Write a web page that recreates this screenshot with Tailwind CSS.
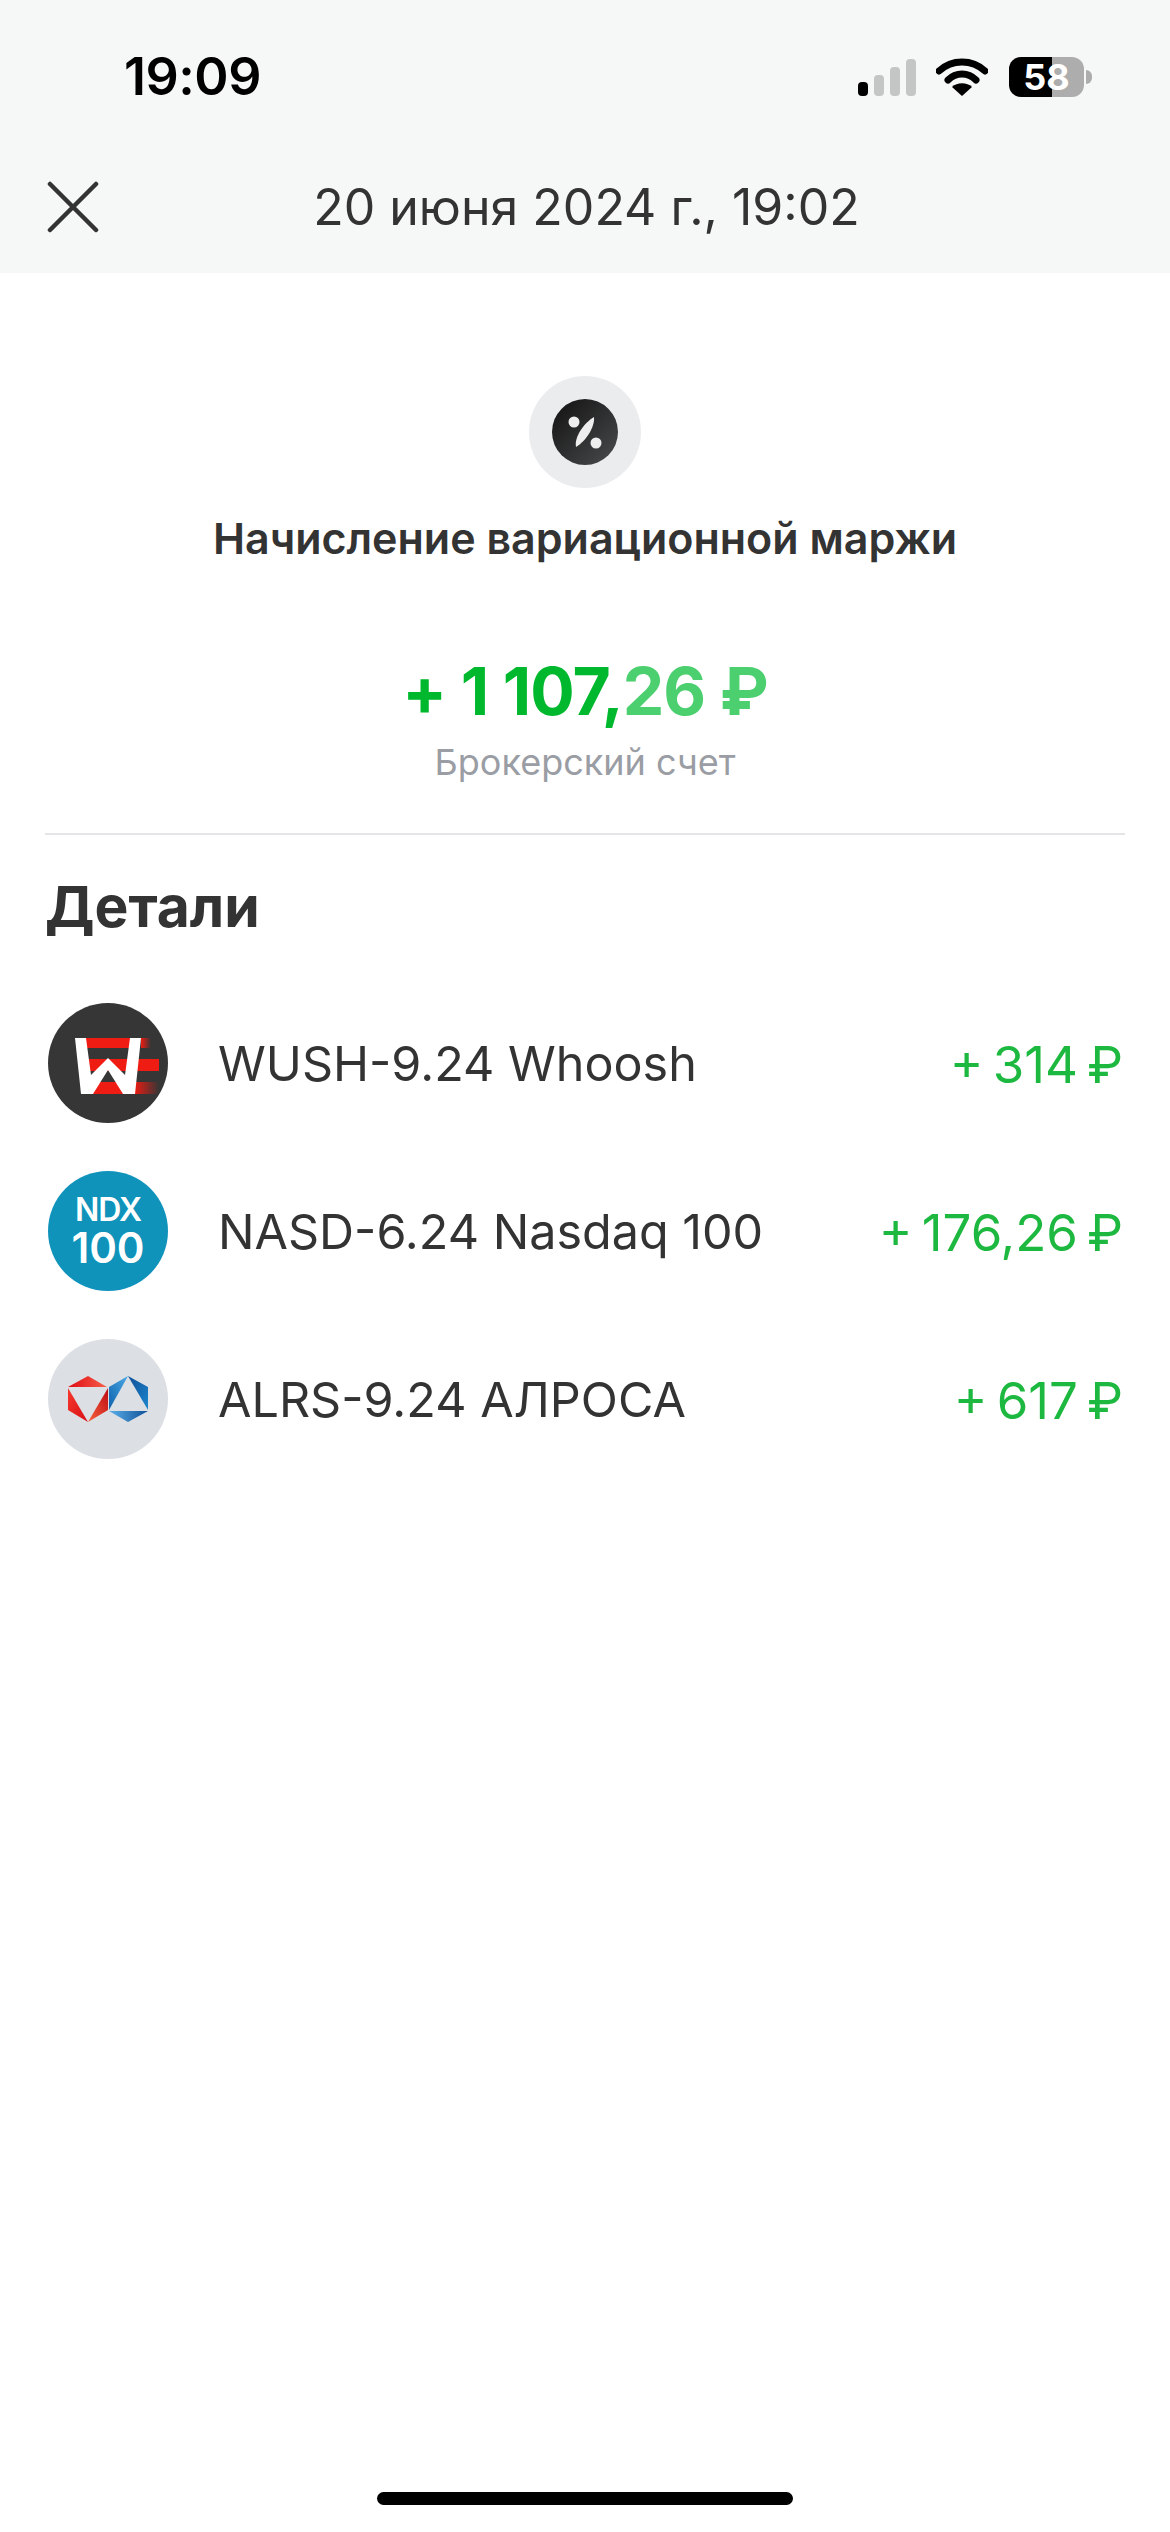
<!DOCTYPE html>
<html lang="ru">
<head>
  <meta charset="UTF-8" />
  <meta name="viewport" content="width=device-width, initial-scale=1.0"/>
  <title>Начисление вариационной маржи</title>
  <script src="https://cdn.jsdelivr.net/npm/@tailwindcss/browser@4"></script>
</head>
<body class="bg-white font-['Inter',sans-serif] text-[#333333]">
<div class="flex flex-col w-[1170px] h-[2532px] overflow-hidden">

  <!-- Header -->
  <header class="bg-[#f6f7f7] h-[273px] shrink-0">
    <!-- Status bar -->
    <div class="flex items-center justify-between h-[154px] pl-[124px] pr-[78px]">
      <span class="text-[52px] leading-none font-semibold text-black tracking-[-0.5px]">19:09</span>
      <div class="flex items-center">
        <svg width="60" height="40" viewBox="0 0 60 40" class="mr-[20px]">
          <rect x="2" y="25" width="10" height="14" rx="4" fill="#000"/>
          <rect x="18" y="18" width="10" height="21" rx="4" fill="#c4c6c6"/>
          <rect x="34" y="10" width="10" height="29" rx="4" fill="#c4c6c6"/>
          <rect x="50" y="2" width="10" height="37" rx="4" fill="#c4c6c6"/>
        </svg>
        <svg width="52" height="40" viewBox="0 0 52 40" class="mr-[21px]">
          <path d="M3 14 C16 2 36 2 49 14" fill="none" stroke="#000" stroke-width="7" stroke-linecap="round"/>
          <path d="M12 23 C20 15 32 15 40 23" fill="none" stroke="#000" stroke-width="7" stroke-linecap="round"/>
          <path d="M26 39 L16 30 C21 25 31 25 36 30 Z" fill="#000"/>
        </svg>
        <div class="w-[75px] h-[40px] rounded-[12px] bg-[linear-gradient(90deg,#000000_43px,#adadad_43px)] flex items-center justify-center">
          <span class="text-[36px] leading-none font-bold text-white">58</span>
        </div>
        <div class="w-[6px] h-[14px] rounded-r-full bg-[#adadad] ml-[2px]"></div>
      </div>
    </div>
    <!-- Nav row -->
    <div class="grid grid-cols-[1fr_auto_1fr] items-center h-[106px] pl-[47px] pr-[44px]">
      <svg width="52" height="52" viewBox="0 0 52 52">
        <path d="M3 3 L49 49 M49 3 L3 49" stroke="#333333" stroke-width="4.5" stroke-linecap="round" fill="none"/>
      </svg>
      <span class="text-[50px] leading-none">20 июня 2024 г., 19:02</span>
      <span></span>
    </div>
  </header>

  <!-- Operation summary -->
  <section class="flex flex-col items-center pt-[103px] mx-[45px] border-b-2 border-[#e3e5e6] h-[562px]">
    <div class="w-[112px] h-[112px] rounded-full bg-[#eaecee] flex items-center justify-center">
      <svg width="66" height="66" viewBox="0 0 66 66">
        <defs>
          <linearGradient id="darkFill" x1="0" y1="0" x2="1" y2="1">
            <stop offset="0" stop-color="#111111"/>
            <stop offset="1" stop-color="#4a4c4d"/>
          </linearGradient>
        </defs>
        <circle cx="33" cy="33" r="33" fill="url(#darkFill)"/>
        <circle cx="22" cy="23" r="5.5" fill="#eeeeee"/>
        <circle cx="44" cy="44" r="5.5" fill="#eeeeee"/>
        <path d="M42 18 C43 28 34 42 24 48 C22 38 32 24 42 18 Z" fill="#eeeeee"/>
      </svg>
    </div>
    <h1 class="mt-[25px] text-[43px] leading-[50px] font-semibold">Начисление вариационной маржи</h1>
    <div class="mt-[88px] text-[66px] leading-[80px] font-bold text-[#00b82d] tracking-[-1px]">+ 1 107,<span class="text-[#4ccf6f]">26 ₽</span></div>
    <div class="mt-[9px] text-[36px] leading-[44px] text-[#9a9da4]">Брокерский счет</div>
  </section>

  <!-- Details -->
  <section class="px-[45px] pt-[38px]">
    <h2 class="text-[57px] leading-[68px] font-bold">Детали</h2>
    <ul class="mt-[62px] flex flex-col gap-[48px]">

      <li class="flex items-center h-[120px]">
        <svg width="120" height="120" viewBox="0 0 120 120" class="ml-[3px] shrink-0">
          <defs>
            <linearGradient id="redFade" x1="0" y1="0" x2="1" y2="0">
              <stop offset="0" stop-color="#f01a10"/>
              <stop offset="1" stop-color="#f01a10" stop-opacity="0"/>
            </linearGradient>
          </defs>
          <circle cx="60" cy="60" r="60" fill="#363636"/>
          <rect x="36" y="35" width="48" height="10" fill="#ee1c12"/>
          <rect x="93" y="35" width="10" height="10" fill="url(#redFade)"/>
          <rect x="38" y="56" width="73" height="12" fill="#ee1c12"/>
          <rect x="42" y="79" width="46" height="12" fill="#ee1c12"/>
          <rect x="86" y="79" width="25" height="12" fill="url(#redFade)"/>
          <polygon points="27,35 38,35 43,72 60,55 77,72 82,35 93,35 87,91 75,91 60,67 45,91 33,91" fill="#ffffff"/>
        </svg>
        <span class="ml-[50px] text-[48.5px] leading-none mt-[2px]">WUSH-9.24 Whoosh</span>
        <span class="ml-auto pr-[2px] text-[51px] leading-none mt-[2px] text-[#1db83f]">+&#8201;314&#8201;₽</span>
      </li>

      <li class="flex items-center h-[120px]">
        <div class="ml-[3px] w-[120px] h-[120px] rounded-full bg-[#0f93bb] shrink-0 flex flex-col items-center justify-center gap-[1px] text-white font-semibold">
          <span class="text-[32px] leading-none tracking-[-1px]">NDX</span>
          <span class="text-[42px] leading-none">100</span>
        </div>
        <span class="ml-[50px] text-[48.5px] leading-none mt-[2px]">NASD-6.24 Nasdaq 100</span>
        <span class="ml-auto pr-[2px] text-[51px] leading-none mt-[2px] text-[#1db83f]">+&#8201;176,26&#8201;₽</span>
      </li>

      <li class="flex items-center h-[120px]">
        <svg width="120" height="120" viewBox="0 0 120 120" class="ml-[3px] shrink-0">
          <defs>
            <linearGradient id="redTop" x1="0" y1="0" x2="1" y2="0">
              <stop offset="0" stop-color="#e00b14"/>
              <stop offset="1" stop-color="#f5604a"/>
            </linearGradient>
            <linearGradient id="redLeft" x1="0" y1="0" x2="1" y2="1">
              <stop offset="0" stop-color="#f53a2c"/>
              <stop offset="1" stop-color="#d90d17"/>
            </linearGradient>
            <linearGradient id="redRight" x1="1" y1="0" x2="0" y2="1">
              <stop offset="0" stop-color="#bd0b15"/>
              <stop offset="1" stop-color="#f7633c"/>
            </linearGradient>
            <linearGradient id="blueTop" x1="0" y1="0" x2="1" y2="1">
              <stop offset="0" stop-color="#114f95"/>
              <stop offset="1" stop-color="#1c87cf"/>
            </linearGradient>
            <linearGradient id="blueLeft" x1="1" y1="0" x2="0" y2="1">
              <stop offset="0" stop-color="#4aa7e4"/>
              <stop offset="1" stop-color="#0f63ad"/>
            </linearGradient>
            <linearGradient id="blueBottom" x1="0" y1="0" x2="1" y2="0">
              <stop offset="0" stop-color="#5bb0e8"/>
              <stop offset="1" stop-color="#0d4f98"/>
            </linearGradient>
          </defs>
          <circle cx="60" cy="60" r="60" fill="#dcdfe3"/>
          <polygon points="20,48 40,37 59,48" fill="url(#redTop)"/>
          <polygon points="20,49 40,83 20,71" fill="url(#redLeft)"/>
          <polygon points="60,49 60,71 40,83" fill="url(#redRight)"/>
          <polygon points="80,37 100,48 100,71" fill="url(#blueTop)"/>
          <polygon points="80,37 61,71 61,48" fill="url(#blueLeft)"/>
          <polygon points="61,72 100,72 80,83" fill="url(#blueBottom)"/>
        </svg>
        <span class="ml-[50px] text-[48.5px] leading-none mt-[2px]">ALRS-9.24 АЛРОСА</span>
        <span class="ml-auto pr-[2px] text-[51px] leading-none mt-[2px] text-[#1db83f]">+&#8201;617&#8201;₽</span>
      </li>
    </ul>
  </section>

  <!-- Home indicator -->
  <div class="mt-auto pb-[27px] flex justify-center">
    <div class="w-[416px] h-[13px] rounded-full bg-black"></div>
  </div>
</div>
</body>
</html>
